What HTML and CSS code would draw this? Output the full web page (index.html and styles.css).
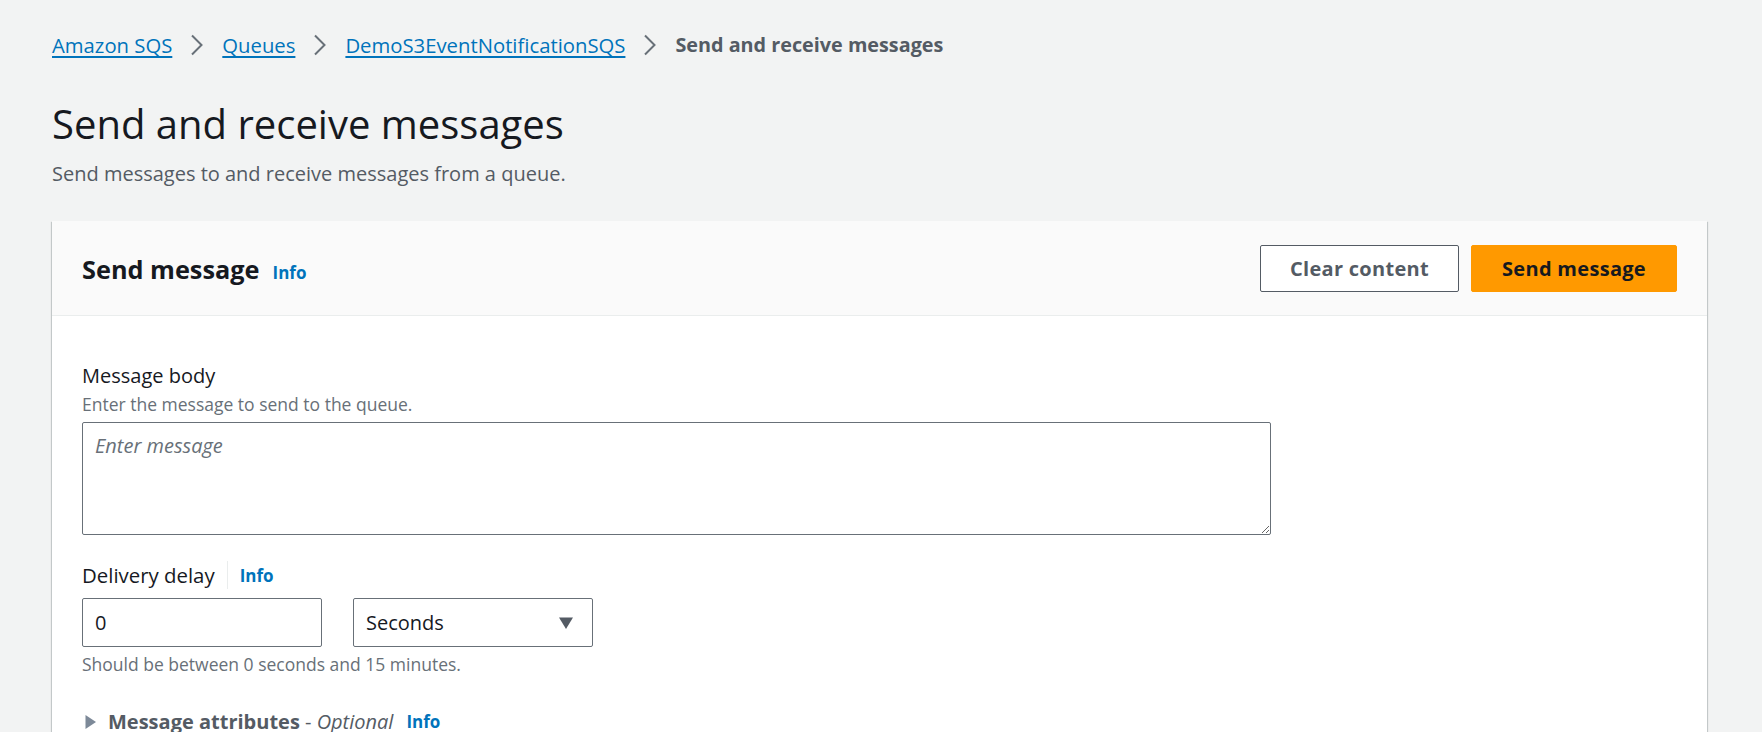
FILE: index.html
```html
<!DOCTYPE html>
<html>
<head>
<meta charset="utf-8">
<link rel="stylesheet" href="styles.css">
</head>
<body>
<main class="page">
  <nav class="breadcrumbs">
    <a href="#" class="crumb">Amazon SQS</a>
    <svg class="sep" width="14" height="22" viewBox="0 0 14 22"><path d="M2 1.5 L11.5 11 L2 20.5" fill="none" stroke="#687078" stroke-width="2"/></svg>
    <a href="#" class="crumb">Queues</a>
    <svg class="sep" width="14" height="22" viewBox="0 0 14 22"><path d="M2 1.5 L11.5 11 L2 20.5" fill="none" stroke="#687078" stroke-width="2"/></svg>
    <a href="#" class="crumb">DemoS3EventNotificationSQS</a>
    <svg class="sep" width="14" height="22" viewBox="0 0 14 22"><path d="M2 1.5 L11.5 11 L2 20.5" fill="none" stroke="#687078" stroke-width="2"/></svg>
    <span class="current">Send and receive messages</span>
  </nav>

  <header class="page-header">
    <h1>Send and receive messages</h1>
    <p class="page-desc">Send messages to and receive messages from a queue.</p>
  </header>

  <section class="container">
    <div class="container-header">
      <div class="title-wrap">
        <h2>Send message</h2>
        <a href="#" class="info">Info</a>
      </div>
      <div class="actions">
        <button class="btn btn-normal">Clear content</button>
        <button class="btn btn-primary">Send message</button>
      </div>
    </div>
    <div class="container-body">
      <div class="field">
        <label class="label">Message body</label>
        <div class="desc">Enter the message to send to the queue.</div>
        <textarea class="textarea" placeholder="Enter message"></textarea>
      </div>
      <div class="field field-delay">
        <div class="label-row">
          <label class="label">Delivery delay</label>
          <span class="divider"></span>
          <a href="#" class="info">Info</a>
        </div>
        <div class="inputs">
          <div class="input">0</div>
          <div class="select">
            <span>Seconds</span>
            <svg width="16" height="14" viewBox="0 0 16 14"><path d="M1 1.5 H15 L8 13 Z" fill="#545b64"/></svg>
          </div>
        </div>
        <div class="hint">Should be between 0 seconds and 15 minutes.</div>
      </div>
      <div class="expander">
        <svg width="13" height="18" viewBox="0 0 13 18"><path d="M1.5 2 L12 9 L1.5 16 Z" fill="#7d8998"/></svg>
        <span class="exp-title"><b>Message attributes</b> - <i>Optional</i></span>
        <a href="#" class="info">Info</a>
      </div>
    </div>
  </section>
</main>
</body>
</html>
```

FILE: styles.css
```css
* { box-sizing: border-box; }
html, body { margin: 0; padding: 0; }
body {
  background: #f2f3f3;
  font-family: "Open Sans", "Noto Sans", sans-serif;
  color: #16191f;
  height: 732px;
  overflow: hidden;
}
.page {
  padding: 30px 55px 0 52px;
}
.breadcrumbs {
  display: flex;
  align-items: center;
  gap: 18px;
  font-size: 20.3px;
  line-height: 30px;
}
.crumb {
  color: #0073bb;
  text-decoration: underline;
  text-underline-offset: 3px;
}
.sep { display: block; }
.current {
  color: #545b64;
  font-weight: 700;
  font-size: 19.8px;
}
.page-header { margin-top: 39px; }
h1 {
  margin: 0;
  font-size: 40px;
  font-weight: 400;
  line-height: 50px;
  color: #16191f;
}
.page-desc {
  margin: 11px 0 0;
  font-size: 20px;
  line-height: 28px;
  color: #545b64;
}
.container {
  margin-top: 33px;
  background: #fff;
  box-shadow: 0 1px 1px 0 rgba(0,28,36,0.3), 1px 1px 1px 0 rgba(0,28,36,0.15), -1px 1px 1px 0 rgba(0,28,36,0.15);
}
.container-header {
  background: #fafafa;
  border-bottom: 1px solid #eaeded;
  padding: 24px 30px 23px 30px;
  display: flex;
  align-items: center;
  justify-content: space-between;
}
.title-wrap {
  display: flex;
  align-items: baseline;
  gap: 13px;
}
h2 {
  margin: 0;
  font-size: 25.3px;
  font-weight: 700;
  line-height: 34px;
}
.info {
  color: #0073bb;
  font-weight: 700;
  font-size: 17px;
  text-decoration: none;
}
.actions {
  display: flex;
  gap: 12px;
}
.btn {
  height: 47px;
  font-family: inherit;
  font-size: 20px;
  font-weight: 700;
  letter-spacing: 0.3px;
  border-radius: 2px;
  padding: 0;
  cursor: pointer;
}
.btn-normal {
  width: 199px;
  background: #fff;
  border: 1px solid #545b64;
  color: #545b64;
}
.btn-primary {
  width: 206px;
  background: #ff9900;
  border: 1px solid #ff9900;
  color: #16191f;
}
.container-body {
  padding: 46px 30px 0 30px;
}
.label {
  display: block;
  font-size: 20px;
  line-height: 28px;
  color: #16191f;
}
.desc {
  font-size: 17.5px;
  line-height: 24px;
  color: #687078;
  margin-top: 2px;
}
.textarea {
  display: block;
  margin-top: 6px;
  width: 1189px;
  height: 113px;
  border: 1px solid #687078;
  border-radius: 2px;
  padding: 9px 12px;
  font-family: inherit;
  font-size: 20px;
  line-height: 28px;
  resize: vertical;
}
.textarea::placeholder {
  color: #687078;
  font-style: italic;
}
.field-delay { margin-top: 26px; }
.label-row {
  display: flex;
  align-items: center;
}
.label-row .label { font-size: 20.4px; }
.divider {
  width: 1px;
  height: 28px;
  background: #eaeded;
  margin: 0 12px;
}
.inputs {
  display: flex;
  gap: 31px;
  margin-top: 9px;
}
.input, .select {
  width: 240px;
  height: 49px;
  border: 1px solid #687078;
  border-radius: 2px;
  font-size: 20px;
  display: flex;
  align-items: center;
  padding: 0 12px;
}
.select { justify-content: space-between; padding-right: 18px; }
.hint {
  font-size: 17.5px;
  line-height: 24px;
  color: #687078;
  margin-top: 5px;
}
.expander {
  margin-top: 32px;
  display: flex;
  align-items: center;
  font-size: 20px;
  line-height: 28px;
}
.expander svg { margin-left: 2px; margin-right: 11px; }
.exp-title {
  color: #545b64;
}
.exp-title b { font-weight: 700; }
.expander .info { margin-left: 13px; }
```
